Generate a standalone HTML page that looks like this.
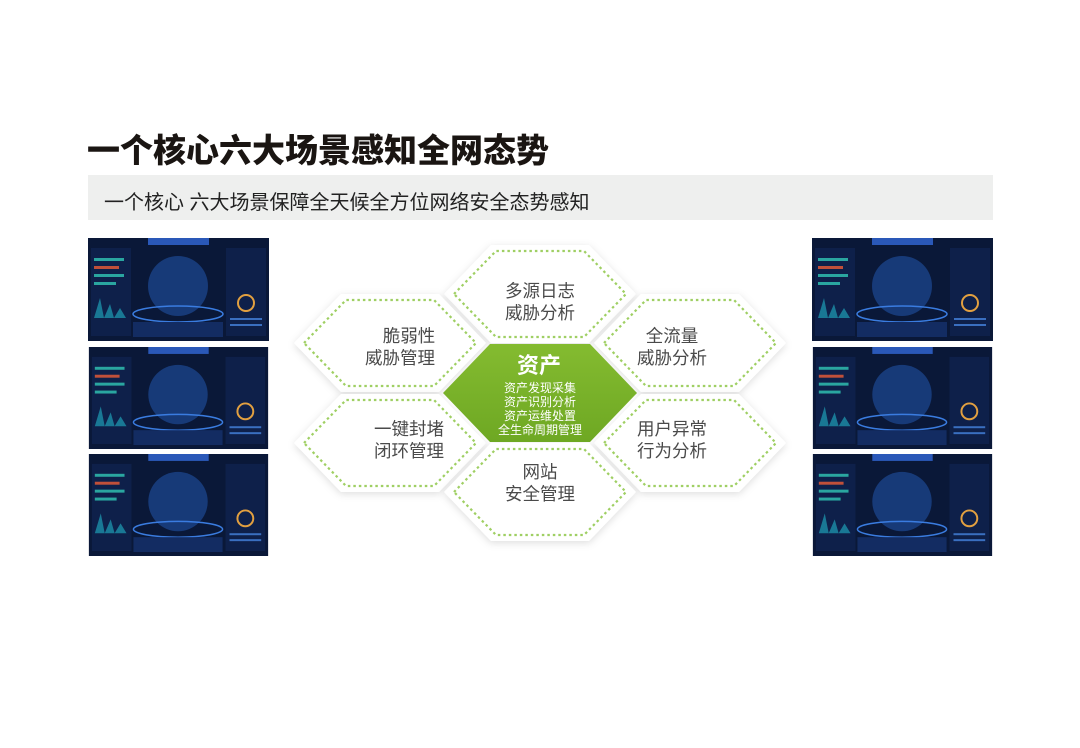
<!DOCTYPE html>
<html><head><meta charset="utf-8"><style>
body{margin:0;width:1080px;height:748px;background:#fff;position:relative;overflow:hidden;font-family:"Liberation Sans","Noto Sans CJK SC",sans-serif}
.t{position:absolute;left:87px;top:124px;font-size:33px;font-weight:900;color:#1a1512;letter-spacing:0px;white-space:nowrap}
.bar{position:absolute;left:88px;top:175px;width:905px;height:45px;background:#eeefee}
.bar span{position:absolute;left:16px;top:11px;font-size:20px;color:#222;white-space:nowrap}
</style></head><body>
<div class="t">一个核心六大场景感知全网态势</div>
<div class="bar"><span>一个核心 六大场景保障全天候全方位网络安全态势感知</span></div>

<svg width="1080" height="748" style="position:absolute;left:0;top:0" xmlns="http://www.w3.org/2000/svg">
<defs>
<filter id="sh" x="-20%" y="-20%" width="140%" height="140%"><feDropShadow dx="0" dy="2" stdDeviation="4" flood-color="#000" flood-opacity="0.13"/></filter>
<linearGradient id="g" x1="0" y1="0" x2="0" y2="1"><stop offset="0" stop-color="#84bb30"/><stop offset="1" stop-color="#6ea823"/></linearGradient>
<symbol id="hx" overflow="visible"><polygon points="-96,0 -49,-49 49,-49 96,0 49,49 -49,49" fill="#fff" filter="url(#sh)"/><polygon points="-86,0 -44,-43 44,-43 86,0 44,43 -44,43" fill="none" stroke="#9fcf63" stroke-width="2.2" stroke-dasharray="2.5 3"/></symbol>
<symbol id="th" viewBox="0 0 181 103" overflow="hidden">
<rect width="181" height="103" fill="#0a1838"/>
<rect x="60" y="0" width="61" height="7" fill="#2a58b8"/>
<rect x="3" y="10" width="40" height="88" fill="#0f2452" opacity=".7"/>
<rect x="138" y="10" width="40" height="88" fill="#0f2452" opacity=".7"/>
<rect x="6" y="20" width="30" height="3" fill="#2aa6a0"/><rect x="6" y="28" width="25" height="3" fill="#c0503a"/><rect x="6" y="36" width="30" height="3" fill="#2aa6a0"/><rect x="6" y="44" width="22" height="3" fill="#2aa6a0"/>
<path d="M6 80 L12 60 L16 80 L22 66 L26 80 L32 70 L38 80Z" fill="#1d8fa8" opacity=".8"/>
<circle cx="90" cy="48" r="30" fill="#173a78"/><ellipse cx="90" cy="76" rx="45" ry="8" fill="none" stroke="#3a7ce0" stroke-width="1.5"/>
<rect x="45" y="84" width="90" height="15" fill="#132c62"/>
<circle cx="158" cy="65" r="8" fill="none" stroke="#e2a040" stroke-width="2"/>
<rect x="142" y="80" width="32" height="2" fill="#3a6fc0"/><rect x="142" y="86" width="32" height="2" fill="#3a6fc0"/>
</symbol>
</defs>
<use href="#hx" x="540" y="294"/>
<use href="#hx" x="390" y="343"/>
<use href="#hx" x="690" y="343"/>
<use href="#hx" x="390" y="443"/>
<use href="#hx" x="690" y="443"/>
<use href="#hx" x="540" y="492"/>
<polygon points="443,393 490,344 590,344 637,393 590,442 490,442" fill="url(#g)"/>
<g font-family="Liberation Sans,Noto Sans CJK SC,sans-serif" font-size="17.5" fill="#4a4a4a" text-anchor="middle">
<text x="540" y="297">多源日志</text><text x="540" y="319">威胁分析</text>
<text x="409" y="342">脆弱性</text><text x="400" y="364">威胁管理</text>
<text x="672" y="342">全流量</text><text x="672" y="364">威胁分析</text>
<text x="409" y="435">一键封堵</text><text x="409" y="457">闭环管理</text>
<text x="672" y="435">用户异常</text><text x="672" y="457">行为分析</text>
<text x="540" y="478">网站</text><text x="540" y="500">安全管理</text>
</g>
<g font-family="Liberation Sans,Noto Sans CJK SC,sans-serif" fill="#fff" text-anchor="middle">
<text x="539" y="373" font-size="22" font-weight="bold">资产</text>
<text x="540" y="392" font-size="12">资产发现采集</text>
<text x="540" y="406" font-size="12">资产识别分析</text>
<text x="540" y="420" font-size="12">资产运维处置</text>
<text x="540" y="434" font-size="12">全生命周期管理</text>
</g>
<use href="#th" x="88" y="238" width="181" height="103"/>
<use href="#th" x="88" y="347" width="181" height="102"/>
<use href="#th" x="88" y="454" width="181" height="102"/>
<use href="#th" x="812" y="238" width="181" height="103"/>
<use href="#th" x="812" y="347" width="181" height="102"/>
<use href="#th" x="812" y="454" width="181" height="102"/>
</svg>
</body></html>
